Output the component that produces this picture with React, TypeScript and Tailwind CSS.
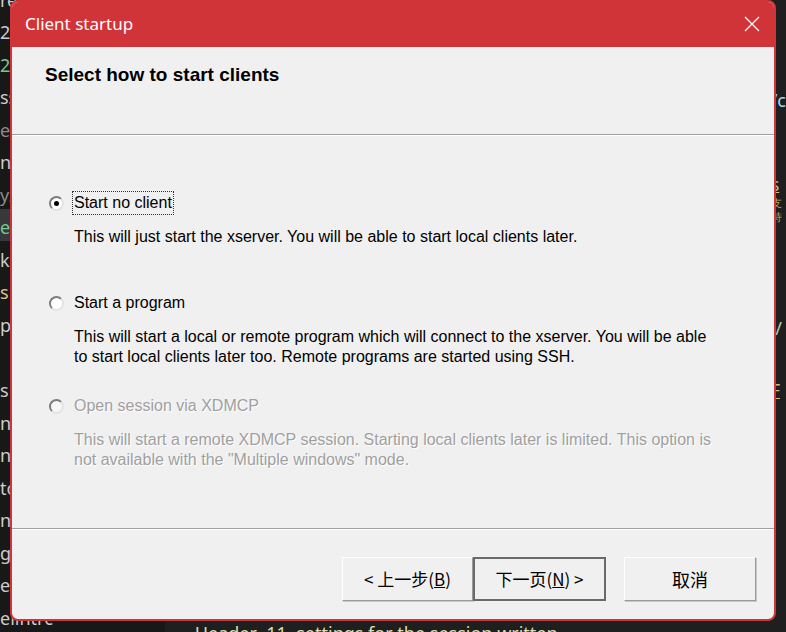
import React from "react";

const sideLines: { t: string; c: string; hl?: boolean }[] = [
  { t: "re", c: "text-[#cccccc]" },
  { t: "2", c: "text-[#cccccc]" },
  { t: "2", c: "text-[#73c991]" },
  { t: "ss", c: "text-[#cccccc]" },
  { t: "e", c: "text-[#8b8b8b]" },
  { t: "nu", c: "text-[#cccccc]" },
  { t: "y/l", c: "text-[#8b8b8b]" },
  { t: "et", c: "text-[#73c991]", hl: true },
  { t: "k", c: "text-[#cccccc]" },
  { t: "s", c: "text-[#e2c08d]" },
  { t: "pe", c: "text-[#cccccc]" },
  { t: "", c: "text-[#cccccc]" },
  { t: "s", c: "text-[#cccccc]" },
  { t: "nf", c: "text-[#cccccc]" },
  { t: "n", c: "text-[#cccccc]" },
  { t: "to", c: "text-[#cccccc]" },
  { t: "n", c: "text-[#cccccc]" },
  { t: "g", c: "text-[#cccccc]" },
  { t: "e", c: "text-[#cccccc]" },
  { t: "elintrc", c: "text-[#cccccc]" },
];

function Radio({ checked, disabled }: { checked?: boolean; disabled?: boolean }) {
  return (
    <span
      className={
        "flex h-[15px] w-[15px] shrink-0 items-center justify-center rounded-full border-2 border-t-[#7c7c7c] border-l-[#7c7c7c] border-r-[#e3e3e3] border-b-[#e3e3e3] " +
        (disabled ? "bg-[#f6f6f6]" : "bg-white")
      }
    >
      {checked && <span className="h-[5px] w-[5px] rounded-full bg-black" />}
    </span>
  );
}

function Option({
  label,
  lines,
  checked,
  disabled,
  focused,
  className,
}: {
  label: string;
  lines: string[];
  checked?: boolean;
  disabled?: boolean;
  focused?: boolean;
  className?: string;
}) {
  const tone = disabled
    ? "text-[#a0a0a0] [text-shadow:1px_1px_0_#ffffff]"
    : "text-black";
  return (
    <div className={"flex flex-col " + (className ?? "")}>
      <div className="flex h-[20px] items-center gap-[8px] pl-[37px]">
        <Radio checked={checked} disabled={disabled} />
        <span
          className={
            "px-[1px] py-[1px] leading-[20px] " +
            tone +
            (focused ? " border border-dotted border-[#333]" : " border border-transparent")
          }
        >
          {label}
        </span>
      </div>
      <div className={"mt-[14px] pl-[62px] leading-[20px] " + tone}>
        {lines.map((l) => (
          <div key={l}>{l}</div>
        ))}
      </div>
    </div>
  );
}

function Btn({
  children,
  primary,
  className,
}: {
  children: React.ReactNode;
  primary?: boolean;
  className?: string;
}) {
  return (
    <div
      className={
        "flex h-[44px] items-center justify-center bg-[#f0f0f0] text-[17px] text-black " +
        (primary
          ? "border-2 border-[#6a6a6a] "
          : "border border-t-white border-l-white border-r-[#9a9a9a] border-b-[#9a9a9a] shadow-[1px_1px_0_#c8c8c8] ") +
        (className ?? "")
      }
    >
      {children}
    </div>
  );
}

export default function App() {
  return (
    <div className="relative h-[632px] w-[786px] overflow-hidden bg-[#1f1f1f] font-['Liberation_Sans','Noto_Sans_CJK_SC',sans-serif]">
      {/* editor behind */}
      <div className="flex h-full">
        <div className="flex w-[170px] flex-col bg-[#181818] font-['Noto_Sans',sans-serif] text-[18px]">
          <div className="mt-[-19px]" />
          {sideLines.map((l, i) => (
            <div
              key={i}
              className={
                "flex h-[33px] items-end pb-[2px] leading-[24px] " +
                l.c +
                (l.hl ? " bg-[#37373d]" : "")
              }
            >
              {l.t}
            </div>
          ))}
        </div>
        <div className="flex flex-1 flex-col font-['Noto_Sans',sans-serif] text-[18px]">
          <div className="mt-[86px] pl-[606px] leading-[28px] text-[#9cdcfe]">/c</div>
          <div className="mt-[58px] pl-[606px] leading-[24px] text-[#d7ba7d] underline">s</div>
          <div className="pl-[606px] text-[11px] leading-[14px] text-[#b5a45a]">支持</div>
          <div className="mt-[64px] h-[1px] bg-[#3c3c3c]" />
          <div className="mt-[28px] pl-[606px] leading-[24px] text-[#b5cea8]">i/</div>
          <div className="mt-[38px] pl-[606px] leading-[24px] text-[#d7ba7d] underline">F</div>
          <div className="mt-[219px] pl-[30px] leading-[24px] text-[#dcdcaa]">
            Header&nbsp;&nbsp;11&nbsp;&nbsp;settings&nbsp;for&nbsp;the&nbsp;session&nbsp;written
          </div>
        </div>
      </div>

      {/* dialog */}
      <div className="absolute left-[10px] top-0 flex h-[621px] w-[766px] flex-col overflow-hidden rounded-[8px] border-2 border-[#d13438] bg-[#f0f0f0] text-[16px]">
        <div className="flex h-[45px] shrink-0 items-center justify-between bg-[#d13438] pl-[13px] pr-[14px] font-['Noto_Sans',sans-serif] text-[17px] text-white">
          <span className="mt-[-2px]">Client startup</span>
          <svg width="16" height="16" viewBox="0 0 16 16" className="mt-[-1px]">
            <path d="M1 1 L15 15 M15 1 L1 15" stroke="#fff" strokeWidth="1.2" fill="none" />
          </svg>
        </div>
        <div className="h-[87px] shrink-0 pl-[33px] pt-[16px] text-[19px] font-bold leading-[24px] text-black">
          Select how to start clients
        </div>
        <div className="h-[2px] shrink-0 border-t border-b border-t-[#a0a0a0] border-b-white" />

        <div className="flex flex-col pt-[57px]">
          <Option
            checked
            focused
            label="Start no client"
            lines={["This will just start the xserver. You will be able to start local clients later."]}
          />
          <Option
            className="mt-[46px]"
            label="Start a program"
            lines={[
              "This will start a local or remote program which will connect to the xserver. You will be able",
              "to start local clients later too. Remote programs are started using SSH.",
            ]}
          />
          <Option
            className="mt-[29px]"
            disabled
            label="Open session via XDMCP"
            lines={[
              "This will start a remote XDMCP session. Starting local clients later is limited. This option is",
              "not available with the \"Multiple windows\" mode.",
            ]}
          />
        </div>

        <div className="mt-auto h-[2px] shrink-0 border-t border-b border-t-[#a0a0a0] border-b-white" />
        <div className="flex h-[89px] shrink-0 items-start pl-[330px] pt-[27px] font-['Noto_Sans_CJK_SC',sans-serif]">
          <Btn className="w-[131px]">
            &lt; 上一步(<span className="underline">B</span>)
          </Btn>
          <Btn primary className="w-[133px]">
            下一页(<span className="underline">N</span>) &gt;
          </Btn>
          <Btn className="ml-[18px] w-[132px] text-[18px]">取消</Btn>
        </div>
      </div>
    </div>
  );
}
